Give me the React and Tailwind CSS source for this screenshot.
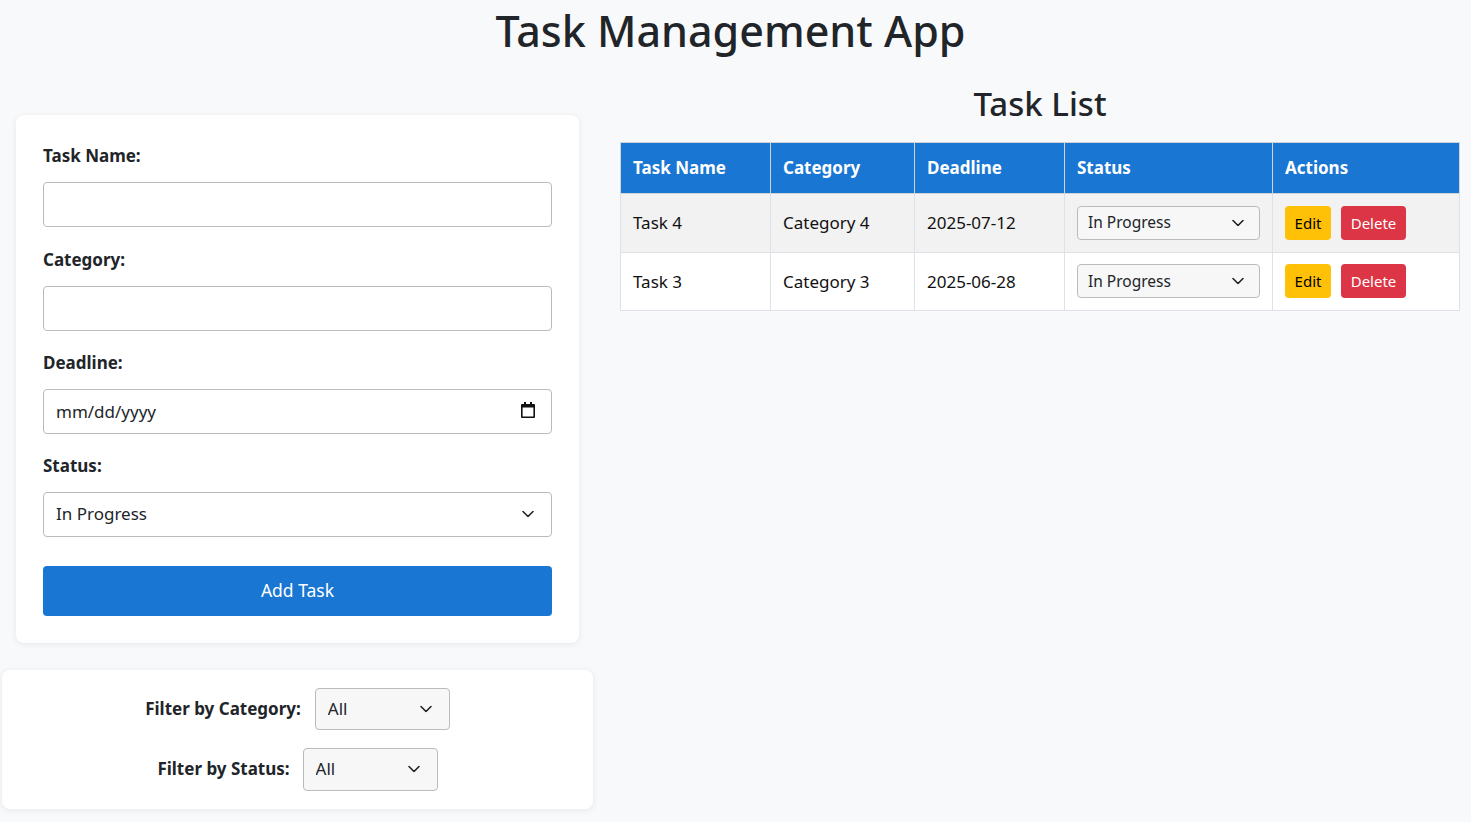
import { useState } from 'react'

const font = { fontFamily: "'Noto Sans', 'Open Sans', sans-serif" }

function Chevron({ className = '' }) {
  return (
    <svg width="12" height="7" viewBox="0 0 12 7" className={className} fill="none">
      <path d="M1 1l5 5 5-5" stroke="#222" strokeWidth="1.6" strokeLinecap="round" strokeLinejoin="round" />
    </svg>
  )
}

function Calendar() {
  return (
    <svg width="14" height="16" viewBox="0 0 14 16">
      <path
        fillRule="evenodd"
        fill="#111"
        d="M3 0h2v2h4V0h2v2h2a1 1 0 011 1v12a1 1 0 01-1 1H1a1 1 0 01-1-1V3a1 1 0 011-1h2zM1.6 5.5v8.9h10.8V5.5z"
      />
    </svg>
  )
}

function Select({ value, onChange, options, className, textClass, chevronRight }) {
  return (
    <div className={'relative ' + className}>
      <select
        value={value}
        onChange={e => onChange(e.target.value)}
        className={'w-full h-full appearance-none outline-none cursor-pointer ' + textClass}
        style={font}
      >
        {options.map(o => <option key={o}>{o}</option>)}
      </select>
      <Chevron className={'absolute top-1/2 -translate-y-1/2 pointer-events-none ' + chevronRight} />
    </div>
  )
}

export default function App() {
  const [name, setName] = useState('')
  const [category, setCategory] = useState('')
  const [deadline, setDeadline] = useState('')
  const [status, setStatus] = useState('In Progress')
  const [filterCat, setFilterCat] = useState('All')
  const [filterStatus, setFilterStatus] = useState('All')
  const [tasks, setTasks] = useState([
    { id: 4, name: 'Task 4', category: 'Category 4', deadline: '2025-07-12', status: 'In Progress' },
    { id: 3, name: 'Task 3', category: 'Category 3', deadline: '2025-06-28', status: 'In Progress' },
  ])

  const statuses = ['Pending', 'In Progress', 'Completed']

  const addTask = () => {
    if (!name) return
    setTasks([{ id: Date.now(), name, category, deadline, status }, ...tasks])
    setName('')
    setCategory('')
    setDeadline('')
  }

  const shown = tasks.filter(t =>
    (filterCat === 'All' || t.category === filterCat) &&
    (filterStatus === 'All' || t.status === filterStatus))

  const inputCls = 'w-full h-[45px] bg-white border border-[#bbbbbb] rounded-[4px] px-3 text-[17px] text-[#212529] outline-none'
  const labelCls = 'block text-[17px] leading-6 font-bold mt-[2px] mb-[14px]'

  return (
    <div style={font} className="min-h-screen bg-[#f8f9fa] text-[#212529]">
      <h1 className="pt-[4px] pr-[10px] text-center text-[43px] leading-[53px] font-medium text-[#212529]">Task Management App</h1>

      <div className="flex items-start mt-[27px]">
        {/* left column */}
        <div className="w-[595px] shrink-0 flex flex-col">
          <div className="mx-4 mt-[31px] bg-white rounded-lg shadow-[0_1px_6px_rgba(0,0,0,0.08)] p-[27px]">
            <label className={labelCls}>Task Name:</label>
            <input value={name} onChange={e => setName(e.target.value)} className={inputCls + ' mb-[18.5px]'} style={font} />

            <label className={labelCls}>Category:</label>
            <input value={category} onChange={e => setCategory(e.target.value)} className={inputCls + ' mb-[18.5px]'} style={font} />

            <label className={labelCls}>Deadline:</label>
            <div className="relative mb-[19.5px]">
              <input
                value={deadline}
                onChange={e => setDeadline(e.target.value)}
                placeholder="mm/dd/yyyy"
                className={inputCls + ' placeholder:text-[#212529]'}
                style={font}
              />
              <div className="absolute right-[17px] top-[13px] pointer-events-none"><Calendar /></div>
            </div>

            <label className={labelCls}>Status:</label>
            <Select
              value={status}
              onChange={setStatus}
              options={statuses}
              className="h-[45px]"
              textClass="bg-white border border-[#bbbbbb] rounded-[4px] px-3 text-[17px] text-[#212529]"
              chevronRight="right-[18px]"
            />

            <button
              onClick={addTask}
              className="w-full h-[50px] mt-[29px] bg-[#1976d2] text-white text-[17.5px] rounded-[4px] cursor-pointer"
            >
              Add Task
            </button>
          </div>

          <div className="ml-[2px] w-[591px] mt-[27px] bg-white rounded-lg shadow-[0_1px_6px_rgba(0,0,0,0.08)] py-[18px] flex flex-col items-center gap-[18px]">
            <div className="flex items-center gap-[14px]">
              <span className="text-[17px] font-bold">Filter by Category:</span>
              <Select
                value={filterCat}
                onChange={setFilterCat}
                options={['All', ...Array.from(new Set(tasks.map(t => t.category)))]}
                className="w-[135px] h-[42px]"
                textClass="bg-[#f7f7f7] border border-[#bbbbbb] rounded-[4px] px-3 text-[17px] text-[#212529]"
                chevronRight="right-[18px]"
              />
            </div>
            <div className="flex items-center gap-[13px]">
              <span className="text-[17px] font-bold">Filter by Status:</span>
              <Select
                value={filterStatus}
                onChange={setFilterStatus}
                options={['All', ...statuses]}
                className="w-[135px] h-[43px]"
                textClass="bg-[#f7f7f7] border border-[#bbbbbb] rounded-[4px] px-3 text-[17px] text-[#212529]"
                chevronRight="right-[18px]"
              />
            </div>
          </div>
        </div>

        {/* right column */}
        <div className="flex-1 pl-[25px] pr-[11px]">
          <h2 className="text-center text-[33px] leading-[40px] font-medium mb-[18px]">Task List</h2>
          <table className="w-full border-collapse bg-white text-[17px]">
            <thead>
              <tr className="bg-[#1976d2] text-white">
                <th className="w-[150px] h-[51px] border border-[#d0d4d8] px-3 text-left font-bold">Task Name</th>
                <th className="w-[144px] border border-[#d0d4d8] px-3 text-left font-bold">Category</th>
                <th className="w-[150px] border border-[#d0d4d8] px-3 text-left font-bold">Deadline</th>
                <th className="w-[207px] border border-[#d0d4d8] px-3 text-left font-bold">Status</th>
                <th className="border border-[#d0d4d8] px-3 text-left font-bold">Actions</th>
              </tr>
            </thead>
            <tbody>
              {shown.map((t, i) => (
                <tr key={t.id} className={i % 2 === 0 ? 'bg-[#f2f2f2]' : 'bg-white'}>
                  <td className="h-[58.5px] border border-[#dee2e6] px-3 text-[#111]">{t.name}</td>
                  <td className="border border-[#dee2e6] px-3 text-[#111]">{t.category}</td>
                  <td className="border border-[#dee2e6] px-3 text-[#111]">{t.deadline}</td>
                  <td className="border border-[#dee2e6] px-3">
                    <Select
                      value={t.status}
                      onChange={v => setTasks(tasks.map(x => x.id === t.id ? { ...x, status: v } : x))}
                      options={statuses}
                      className="w-[183px] h-[34px]"
                      textClass="bg-[#f7f7f7] border border-[#bbbbbb] rounded-[4px] px-[10px] text-[15.5px] text-[#212529]"
                      chevronRight="right-[16px]"
                    />
                  </td>
                  <td className="border border-[#dee2e6] px-3">
                    <div className="flex gap-[10px]">
                      <button className="h-[34px] w-[46px] bg-[#ffc107] text-black text-[15px] rounded-[4px] cursor-pointer">Edit</button>
                      <button
                        onClick={() => setTasks(tasks.filter(x => x.id !== t.id))}
                        className="h-[34px] w-[65px] bg-[#dc3545] text-white text-[15px] rounded-[4px] cursor-pointer"
                      >
                        Delete
                      </button>
                    </div>
                  </td>
                </tr>
              ))}
            </tbody>
          </table>
        </div>
      </div>
    </div>
  )
}
